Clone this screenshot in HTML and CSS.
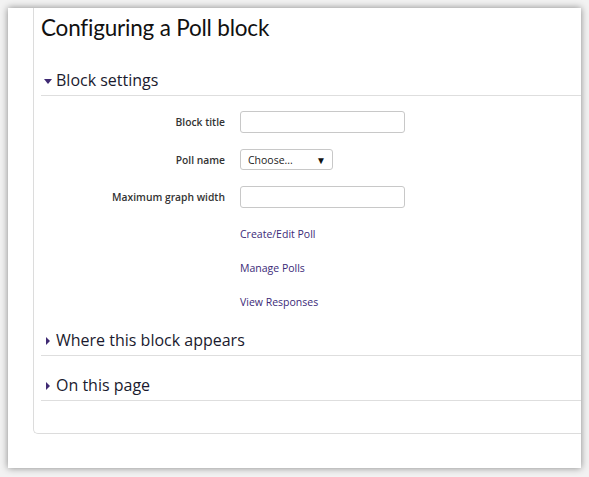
FILE: index.html
```html
<!DOCTYPE html>
<html>
<head>
<meta charset="utf-8">
<link rel="stylesheet" href="styles.css">
</head>
<body>
<div class="window">
  <div class="panel">
    <h1 class="title">Configuring a Poll block</h1>
    <div class="section open">
      <div class="sec-head"><span class="caret-down"></span>Block settings</div>
      <div class="form">
        <label class="lbl">Block title</label>
        <div class="ctl"><span class="input"></span></div>
        <label class="lbl">Poll name</label>
        <div class="ctl"><span class="select"><span class="sel-text">Choose...</span><span class="sel-arrow">▼</span></span></div>
        <label class="lbl">Maximum graph width</label>
        <div class="ctl"><span class="input"></span></div>
      </div>
      <div class="links">
        <a class="link">Create/Edit Poll</a>
        <a class="link">Manage Polls</a>
        <a class="link">View Responses</a>
      </div>
    </div>
    <div class="section where">
      <div class="sec-head"><span class="caret-right"></span>Where this block appears</div>
    </div>
    <div class="section onpage">
      <div class="sec-head"><span class="caret-right"></span>On this page</div>
    </div>
  </div>
</div>
</body>
</html>
```
FILE: styles.css
```css
html, body { margin: 0; padding: 0; }
body {
  background: #f2f2f2;
  width: 589px;
  height: 477px;
  overflow: hidden;
  font-family: "Open Sans", "Noto Sans", sans-serif;
}
.window {
  margin: 8px 0 0 8px;
  width: 573px;
  height: 460px;
  background: #fff;
  box-shadow: 0 0 7px rgba(0,0,0,0.45);
  overflow: hidden;
}
.panel {
  margin-left: 25px;
  width: 600px;
  height: 426px;
  border-left: 1px solid #dcdcdc;
  border-bottom: 1px solid #dcdcdc;
  border-bottom-left-radius: 5px;
  padding-left: 7px;
  box-sizing: border-box;
}
.title {
  margin: 0;
  padding-top: 6px;
  font-family: "Lato", "Noto Sans", sans-serif;
  font-weight: 400;
  font-size: 22.5px;
  line-height: 28px;
  color: #111;
  letter-spacing: -0.2px;
}
.section {
  width: 540px;
}
.sec-head {
  display: flex;
  align-items: center;
  font-size: 16px;
  color: #1a1a2e;
  height: 22px;
  border-bottom: 1px solid #dedede;
  padding-bottom: 4px;
}
.open .sec-head { margin-top: 27px; }
.where .sec-head { margin-top: 19px; }
.onpage .sec-head { margin-top: 18px; }
.caret-down {
  width: 0; height: 0;
  border-left: 4px solid transparent;
  border-right: 4px solid transparent;
  border-top: 5px solid #3f2a73;
  margin: 2px 4px 0 3px;
}
.caret-right {
  width: 0; height: 0;
  border-top: 4px solid transparent;
  border-bottom: 4px solid transparent;
  border-left: 4px solid #3f2a73;
  margin: 2px 6px 0 5px;
}
.form {
  display: grid;
  grid-template-columns: 184px auto;
  column-gap: 15px;
  row-gap: 16px;
  margin-top: 15px;
  align-items: center;
}
.lbl {
  text-align: right;
  font-size: 10.3px;
  font-weight: 600;
  color: #333;
}
.ctl { display: flex; }
.input {
  display: block;
  width: 163px;
  height: 20px;
  border: 1px solid #c8c8c8;
  border-radius: 3px;
  background: #fff;
}
.select {
  display: flex;
  align-items: center;
  justify-content: space-between;
  height: 19px;
  border: 1px solid #c8c8c8;
  border-radius: 3px;
  padding: 0 6px 0 7px;
  width: 78px;
  font-size: 10.5px;
  color: #222;
}
.sel-arrow { font-size: 10px; color: #111; }
.links {
  display: flex;
  flex-direction: column;
  gap: 19px;
  padding-left: 199px;
  margin-top: 19px;
}
.link {
  font-size: 10.5px;
  color: #3b2a78;
  line-height: 15px;
}
```
